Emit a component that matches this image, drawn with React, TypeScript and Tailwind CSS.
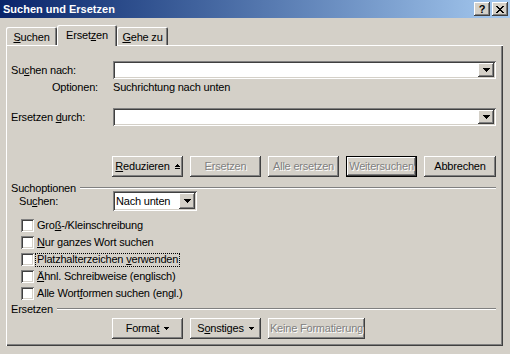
import React from "react";

const raised =
  "shadow-[inset_-1px_-1px_#404040,inset_1px_1px_#ffffff,inset_-2px_-2px_#808080]";
const sunken =
  "shadow-[inset_1px_1px_#808080,inset_-1px_-1px_#ffffff,inset_2px_2px_#404040,inset_-2px_-2px_#d4d0c8]";
const disabledText = "text-[#808080] [text-shadow:1px_1px_0_#ffffff]";

function DownArrow7() {
  return (
    <svg width="7" height="4" viewBox="0 0 7 4" shapeRendering="crispEdges">
      <rect x="0" y="0" width="7" height="1" fill="#000" />
      <rect x="1" y="1" width="5" height="1" fill="#000" />
      <rect x="2" y="2" width="3" height="1" fill="#000" />
      <rect x="3" y="3" width="1" height="1" fill="#000" />
    </svg>
  );
}

function DownArrow5() {
  return (
    <svg width="5" height="3" viewBox="0 0 5 3" shapeRendering="crispEdges">
      <rect x="0" y="0" width="5" height="1" fill="#000" />
      <rect x="1" y="1" width="3" height="1" fill="#000" />
      <rect x="2" y="2" width="1" height="1" fill="#000" />
    </svg>
  );
}

function UpBarArrow() {
  return (
    <svg width="5" height="5" viewBox="0 0 5 5" shapeRendering="crispEdges">
      <rect x="2" y="0" width="1" height="1" fill="#000" />
      <rect x="1" y="1" width="3" height="1" fill="#000" />
      <rect x="0" y="2" width="5" height="1" fill="#000" />
      <rect x="0" y="4" width="5" height="1" fill="#000" />
    </svg>
  );
}

function CloseGlyph() {
  const px: [number, number][] = [];
  const rows: number[][] = [
    [0, 1, 6, 7],
    [1, 2, 5, 6],
    [2, 3, 4, 5],
    [3, 4],
    [2, 3, 4, 5],
    [1, 2, 5, 6],
    [0, 1, 6, 7],
  ];
  rows.forEach((r, y) => r.forEach((x) => px.push([x, y])));
  return (
    <svg width="8" height="7" viewBox="0 0 8 7" shapeRendering="crispEdges">
      {px.map(([x, y], i) => (
        <rect key={i} x={x} y={y} width="1" height="1" fill="#000" />
      ))}
    </svg>
  );
}

function Combo({ width }: { width: string }) {
  return (
    <div className={`${width} h-[18px] bg-white ${sunken} p-[2px] flex justify-end`}>
      <div className={`w-[16px] h-full bg-[#d4d0c8] ${raised} flex items-center justify-center`}>
        <DownArrow7 />
      </div>
    </div>
  );
}

function Btn({
  children,
  w = "w-[71px]",
  disabled = false,
  isDefault = false,
}: {
  children: React.ReactNode;
  w?: string;
  disabled?: boolean;
  isDefault?: boolean;
}) {
  return (
    <div
      className={`${w} h-[21px] bg-[#d4d0c8] ${raised} ${isDefault ? "border border-black" : ""} flex items-center justify-center gap-[5px] ${disabled ? disabledText : "text-black"}`}
    >
      {children}
    </div>
  );
}

function Check({ children, focus = false }: { children: React.ReactNode; focus?: boolean }) {
  return (
    <div className="h-[17px] flex items-center pl-[10px]">
      <div className={`w-[13px] h-[13px] bg-white ${sunken}`} />
      <div
        className={`ml-[1px] px-[1px] h-[14px] flex items-center border ${focus ? "border-dotted border-black" : "border-transparent"}`}
      >
        {children}
      </div>
    </div>
  );
}

function Group({ label, labelW }: { label: string; labelW: string }) {
  return (
    <div className="h-[6px] flex items-center">
      <span className={`${labelW} shrink-0 whitespace-nowrap`}>{label}</span>
      <div className="flex-1 mr-[7px] h-[2px] border-t border-t-[#808080] border-b border-b-white" />
    </div>
  );
}

export default function App() {
  return (
    <div className="w-[510px] h-[354px] bg-[#d4d0c8] overflow-hidden font-['Liberation_Sans',Arial,sans-serif] text-[11px] leading-[13px] text-black tracking-[-0.2px]">
      {/* Title bar */}
      <div className="h-[18px] flex items-center bg-linear-to-r from-[#0a246a] to-[#a6caf0] pl-[3px] pr-[2px]">
        <span className="flex-1 text-white font-bold text-[11px] tracking-[0px]">Suchen und Ersetzen</span>
        <div className="flex gap-[2px]">
          <div className={`w-[16px] h-[14px] bg-[#d4d0c8] ${raised} flex items-center justify-center font-bold text-[11px] leading-[11px] pt-[1px]`}>
            ?
          </div>
          <div className={`w-[16px] h-[14px] bg-[#d4d0c8] ${raised} flex items-center justify-center`}>
            <CloseGlyph />
          </div>
        </div>
      </div>

      {/* Tabs */}
      <div className="mt-[7px] ml-[6px] h-[20px] flex items-end">
        <div className="w-[51px] h-[18px] rounded-t-[2px] shadow-[inset_1px_1px_#ffffff,inset_-1px_0_#404040,inset_-2px_0_#808080] flex items-center justify-center pt-[2px]">
          <span>
            <span className="underline">S</span>uchen
          </span>
        </div>
        <div className="relative z-10 w-[60px] h-[21px] -mb-px bg-[#d4d0c8] rounded-t-[2px] shadow-[inset_1px_1px_#ffffff,inset_-1px_0_#404040,inset_-2px_0_#808080] flex items-center justify-center">
          <span>
            Erset<span className="underline">z</span>en
          </span>
        </div>
        <div className="w-[51px] h-[18px] rounded-t-[2px] shadow-[inset_1px_1px_#ffffff,inset_-1px_0_#404040,inset_-2px_0_#808080] flex items-center justify-center pt-[2px]">
          <span>
            <span className="underline">G</span>ehe zu
          </span>
        </div>
      </div>

      {/* Panel */}
      <div className="ml-[6px] w-[497px] h-[301px] shadow-[inset_1px_1px_#ffffff,inset_-1px_-1px_#404040,inset_-2px_-2px_#808080] pl-[5px] flex flex-col">
        <div className="mt-[16px] h-[18px] flex items-center">
          <div className="w-[102px]">
            Su<span className="underline">c</span>hen nach:
          </div>
          <Combo width="w-[383px]" />
        </div>
        <div className="mt-[2px] h-[13px] flex items-center">
          <div className="w-[102px] pl-[41px]">Optionen:</div>
          <div>Suchrichtung nach unten</div>
        </div>
        <div className="mt-[14px] h-[18px] flex items-center">
          <div className="w-[102px]">
            Ersetzen <span className="underline">d</span>urch:
          </div>
          <Combo width="w-[383px]" />
        </div>

        <div className="mt-[30px] ml-[101px] flex gap-[7px]">
          <Btn>
            <span>
              <span className="underline">R</span>eduzieren
            </span>
            <UpBarArrow />
          </Btn>
          <Btn disabled>Ersetzen</Btn>
          <Btn disabled>Alle ersetzen</Btn>
          <Btn disabled isDefault>
            Weitersuchen
          </Btn>
          <Btn w="w-[72px]">Abbrechen</Btn>
        </div>

        <div className="mt-[8px]">
          <Group label="Suchoptionen" labelW="w-[69px]" />
        </div>

        <div className="h-[20px] flex items-center">
          <div className="w-[102px] pl-[8px]">
            Su<span className="underline">c</span>hen:
          </div>
          <div className={`w-[84px] h-[20px] bg-white ${sunken} p-[2px] flex items-center`}>
            <span className="flex-1 pl-[1px]">Nach unten</span>
            <div className={`w-[16px] h-full bg-[#d4d0c8] ${raised} flex items-center justify-center`}>
              <DownArrow7 />
            </div>
          </div>
        </div>

        <div className="mt-[6px] flex flex-col">
          <Check>
            <span>
              Gro<span className="underline">ß</span>-/Kleinschreibung
            </span>
          </Check>
          <Check>
            <span>
              <span className="underline">N</span>ur ganzes Wort suchen
            </span>
          </Check>
          <Check focus>
            <span>
              Platzhalterzeichen <span className="underline">v</span>erwenden
            </span>
          </Check>
          <Check>
            <span>
              <span className="underline">Ä</span>hnl. Schreibweise (englisch)
            </span>
          </Check>
          <Check>
            <span>
              Alle Wort<span className="underline">f</span>ormen suchen (engl.)
            </span>
          </Check>
        </div>

        <div className="mt-[4px]">
          <Group label="Ersetzen" labelW="w-[46px]" />
        </div>

        <div className="mt-[6px] ml-[101px] flex gap-[7px]">
          <Btn>
            <span>
              Forma<span className="underline">t</span>
            </span>
            <DownArrow5 />
          </Btn>
          <Btn>
            <span>
              S<span className="underline">o</span>nstiges
            </span>
            <DownArrow5 />
          </Btn>
          <Btn w="w-[97px]" disabled>
            Keine Formatierung
          </Btn>
        </div>
      </div>
    </div>
  );
}
